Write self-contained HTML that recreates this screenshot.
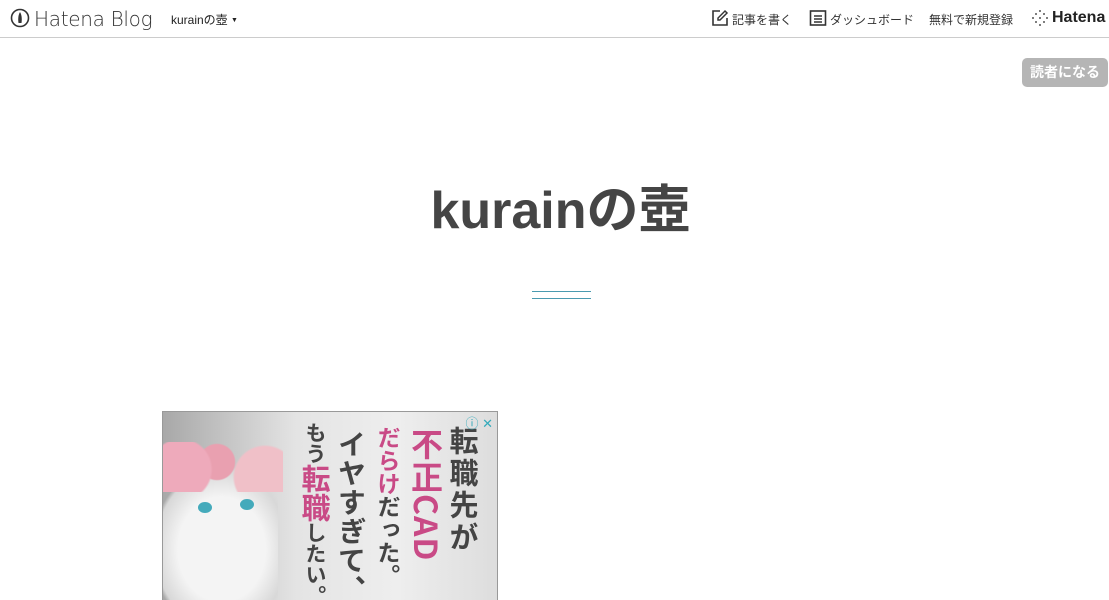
<!DOCTYPE html>
<html><head><meta charset="utf-8"><style>
body{margin:0;width:1109px;height:600px;overflow:hidden;background:#fff;font-family:"Liberation Sans","Noto Sans CJK JP",sans-serif;position:relative}
.bar{position:absolute;left:0;top:0;width:1109px;height:37px;border-bottom:1px solid #ccc;background:#fff}
.a{position:absolute;white-space:nowrap;color:#333}
.v{position:absolute;writing-mode:vertical-rl;font-weight:bold;font-family:"Noto Sans CJK JP",sans-serif;white-space:nowrap;line-height:1}
</style></head><body>
<div class="bar">
<svg class="a" style="left:10px;top:8px" width="20" height="20" viewBox="0 0 20 20"><circle cx="10" cy="10" r="8.5" fill="none" stroke="#333" stroke-width="1.6"/><path d="M10 4 C8 7 8 12 8.5 15 L11.5 15 C12 12 12 7 10 4Z" fill="#333"/></svg>
<div class="a" style="left:34px;top:7px;font-size:20px;color:#333;font-family:'DejaVu Sans',sans-serif;font-weight:200;letter-spacing:-0.3px">Hatena Blog</div>
<div class="a" style="left:171px;top:11px;font-size:12px;color:#222">kurainの壺 <span style="font-size:7px;vertical-align:2px">▼</span></div>
<svg class="a" style="left:711px;top:9px" width="18" height="18" viewBox="0 0 18 18"><path d="M9 2H2v14h14V9" fill="none" stroke="#333" stroke-width="1.6"/><path d="M14 2l2 2-7 7H7V9z" fill="none" stroke="#333" stroke-width="1.5"/></svg>
<div class="a" style="left:732px;top:11px;font-size:12px">記事を書く</div>
<svg class="a" style="left:809px;top:9px" width="18" height="18" viewBox="0 0 18 18"><rect x="1.5" y="2" width="15" height="14" fill="none" stroke="#333" stroke-width="1.6"/><path d="M5 7h8M5 10h8M5 13h8" stroke="#333" stroke-width="1.4"/></svg>
<div class="a" style="left:830px;top:11px;font-size:12px">ダッシュボード</div>
<div class="a" style="left:929px;top:11px;font-size:12px">無料で新規登録</div>
<svg class="a" style="left:1031px;top:9px" width="18" height="18" viewBox="0 0 18 18" fill="#555"><circle cx="9" cy="2" r="1"/><circle cx="5" cy="5" r="1"/><circle cx="13" cy="5" r="1"/><circle cx="2" cy="9" r="1"/><circle cx="16" cy="9" r="1"/><circle cx="9" cy="9" r="1"/><circle cx="5" cy="13" r="1"/><circle cx="13" cy="13" r="1"/><circle cx="9" cy="16" r="1"/></svg>
<div class="a" style="left:1052px;top:9px;font-size:16px;font-weight:bold;color:#222">Hatena</div>
</div>
<div class="a" style="left:1022px;top:58px;width:86px;height:29px;background:#b5b5b5;border-radius:5px;color:#fff;font-weight:bold;font-size:14px;line-height:29px;text-align:center">読者になる</div>
<div class="a" style="left:0;width:1121px;top:168px;text-align:center;font-size:52px;font-weight:bold;color:#454545">kurainの壺</div>
<div class="a" style="left:532px;top:291px;width:59px;border-top:1px solid #4a9ab0"></div>
<div class="a" style="left:532px;top:298px;width:59px;border-top:1px solid #4a9ab0"></div>
<div class="a" style="left:162px;top:411px;width:336px;height:189px;border:1px solid #999;border-bottom:none;box-sizing:border-box;overflow:hidden;background:linear-gradient(90deg,#a8a8a8,#e4e4e4 40%,#eee 70%,#ddd)">
<div style="position:absolute;left:-10px;top:55px;width:125px;height:150px;background:radial-gradient(ellipse at 55% 55%,#f4f4f4 45%,#d8d8d8 68%,transparent 72%)"></div>
<div style="position:absolute;left:0;top:30px;width:120px;height:50px;background:radial-gradient(circle at 15% 55%,#eab 28%,transparent 30%),radial-gradient(circle at 45% 40%,#e9a0b0 24%,transparent 26%),radial-gradient(circle at 85% 70%,#f0c0c8 28%,transparent 30%)"></div>
<div style="position:absolute;left:35px;top:90px;width:14px;height:11px;border-radius:50%;background:#4ab"></div>
<div style="position:absolute;left:77px;top:87px;width:14px;height:11px;border-radius:50%;background:#4ab"></div>
<div class="v" style="left:286px;top:14px;font-size:29px;color:#444;letter-spacing:3px">転職先が</div>
<div class="v" style="left:248px;top:16px;font-size:32px;color:#c94a86;letter-spacing:1px">不正CAD</div>
<div class="v" style="left:214px;top:14px;font-size:23px;color:#444"><span style="color:#c94a86">だらけ</span>だった。</div>
<div class="v" style="left:175px;top:18px;font-size:28px;color:#444;letter-spacing:1px">イヤすぎて、</div>
<div class="v" style="left:138px;top:10px;font-size:21px;color:#444">もう<span style="font-size:29px;color:#c94a86">転職</span>したい。</div>
<div style="position:absolute;right:4px;top:1px;font-size:13px;color:#3ab">ⓘ ✕</div>
</div>
</body></html>
